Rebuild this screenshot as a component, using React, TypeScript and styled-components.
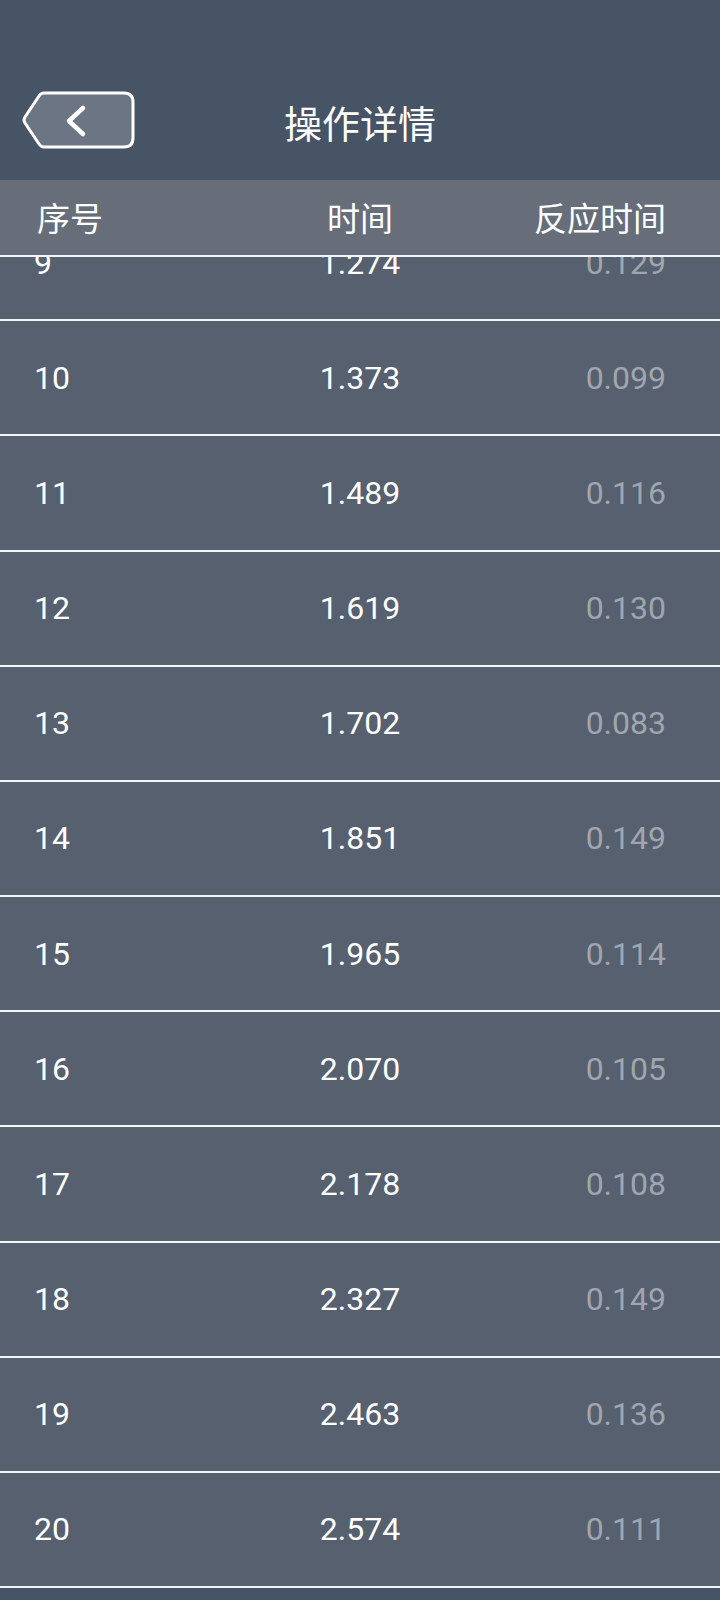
import React from "react";
import styled, { createGlobalStyle } from "styled-components";

const GlobalStyle = createGlobalStyle`
  html, body {
    margin: 0;
    padding: 0;
    background: #465465;
  }
  body {
    font-family: Roboto, "Noto Sans CJK SC", sans-serif;
    color: #ffffff;
  }
  * { box-sizing: border-box; }
`;

const Page = styled.div`
  width: 720px;
  height: 1600px;
  display: flex;
  flex-direction: column;
  background: #465465;
  overflow: hidden;
`;

const NavBar = styled.header`
  height: 180px;
  flex: none;
  padding-top: 60px;
  display: grid;
  grid-template-columns: 1fr auto 1fr;
  align-items: center;
  background: #465465;
`;

const BackButton = styled.button`
  justify-self: start;
  margin: 0 0 0 20px;
  padding: 0;
  border: none;
  background: none;
  width: 116px;
  height: 60px;
  display: block;
  cursor: pointer;
  svg { display: block; }
`;

const Title = styled.h1`
  margin: 0;
  font-family: "Noto Sans CJK SC", sans-serif;
  font-weight: 400;
  font-size: 38px;
  line-height: 1;
  color: #ffffff;
  padding-top: 4px;
  letter-spacing: 0;
`;

const TableHead = styled.div`
  flex: none;
  height: 77px;
  display: grid;
  grid-template-columns: 1fr 1fr 1fr;
  align-items: center;
  background: #676e7a;
  border-bottom: 2px solid #f4f5f6;
  position: relative;
  z-index: 1;
`;

const HeadCell = styled.div<{ $align: "left" | "center" | "right" }>`
  font-family: "Noto Sans CJK SC", sans-serif;
  font-size: 33px;
  line-height: 1;
  color: #ffffff;
  text-align: ${(p) => p.$align};
  padding-left: ${(p) => (p.$align === "left" ? "37px" : "0")};
  padding-right: ${(p) => (p.$align === "right" ? "54px" : "0")};
`;

const ListViewport = styled.div`
  flex: 1;
  overflow: hidden;
`;

const List = styled.div<{ $offset: number }>`
  margin-top: ${(p) => -p.$offset}px;
`;

const Row = styled.div`
  height: 115.18px;
  display: grid;
  grid-template-columns: 1fr 1fr 1fr;
  align-items: center;
  background: #56606f;
  border-bottom: 2px solid #f4f5f6;
`;

const Cell = styled.div<{ $align: "left" | "center" | "right"; $muted?: boolean }>`
  font-family: Roboto, sans-serif;
  font-size: 32px;
  line-height: 1;
  color: ${(p) => (p.$muted ? "#a0a6ae" : "#ffffff")};
  text-align: ${(p) => p.$align};
  padding-left: ${(p) => (p.$align === "left" ? "34px" : "0")};
  padding-right: ${(p) => (p.$align === "right" ? "54px" : "0")};
`;

const rows: [number, string, string][] = [
  [9, "1.274", "0.129"],
  [10, "1.373", "0.099"],
  [11, "1.489", "0.116"],
  [12, "1.619", "0.130"],
  [13, "1.702", "0.083"],
  [14, "1.851", "0.149"],
  [15, "1.965", "0.114"],
  [16, "2.070", "0.105"],
  [17, "2.178", "0.108"],
  [18, "2.327", "0.149"],
  [19, "2.463", "0.136"],
  [20, "2.574", "0.111"],
];

const BackIcon = () => (
  <svg width="116" height="60" viewBox="0 0 116 60">
    <path
      d="M24 3 H104 Q113 3 113 12 V48 Q113 57 104 57 H24 Q21 57 19 54 L5 33 Q3 30 5 27 L19 6 Q21 3 24 3 Z"
      fill="#6b7583"
      stroke="#ffffff"
      strokeWidth="3"
      strokeLinejoin="round"
    />
    <path
      d="M63 18 L49 31 L63 44"
      fill="none"
      stroke="#ffffff"
      strokeWidth="4.5"
      strokeLinecap="round"
      strokeLinejoin="round"
    />
  </svg>
);

export default function App() {
  return (
    <>
      <GlobalStyle />
      <Page>
        <NavBar>
          <BackButton aria-label="返回">
            <BackIcon />
          </BackButton>
          <Title>操作详情</Title>
          <div />
        </NavBar>
        <TableHead>
          <HeadCell $align="left">序号</HeadCell>
          <HeadCell $align="center">时间</HeadCell>
          <HeadCell $align="right">反应时间</HeadCell>
        </TableHead>
        <ListViewport>
          <List $offset={51}>
            {rows.map(([n, t, r]) => (
              <Row key={n}>
                <Cell $align="left">{n}</Cell>
                <Cell $align="center">{t}</Cell>
                <Cell $align="right" $muted>
                  {r}
                </Cell>
              </Row>
            ))}
          </List>
        </ListViewport>
      </Page>
    </>
  );
}
